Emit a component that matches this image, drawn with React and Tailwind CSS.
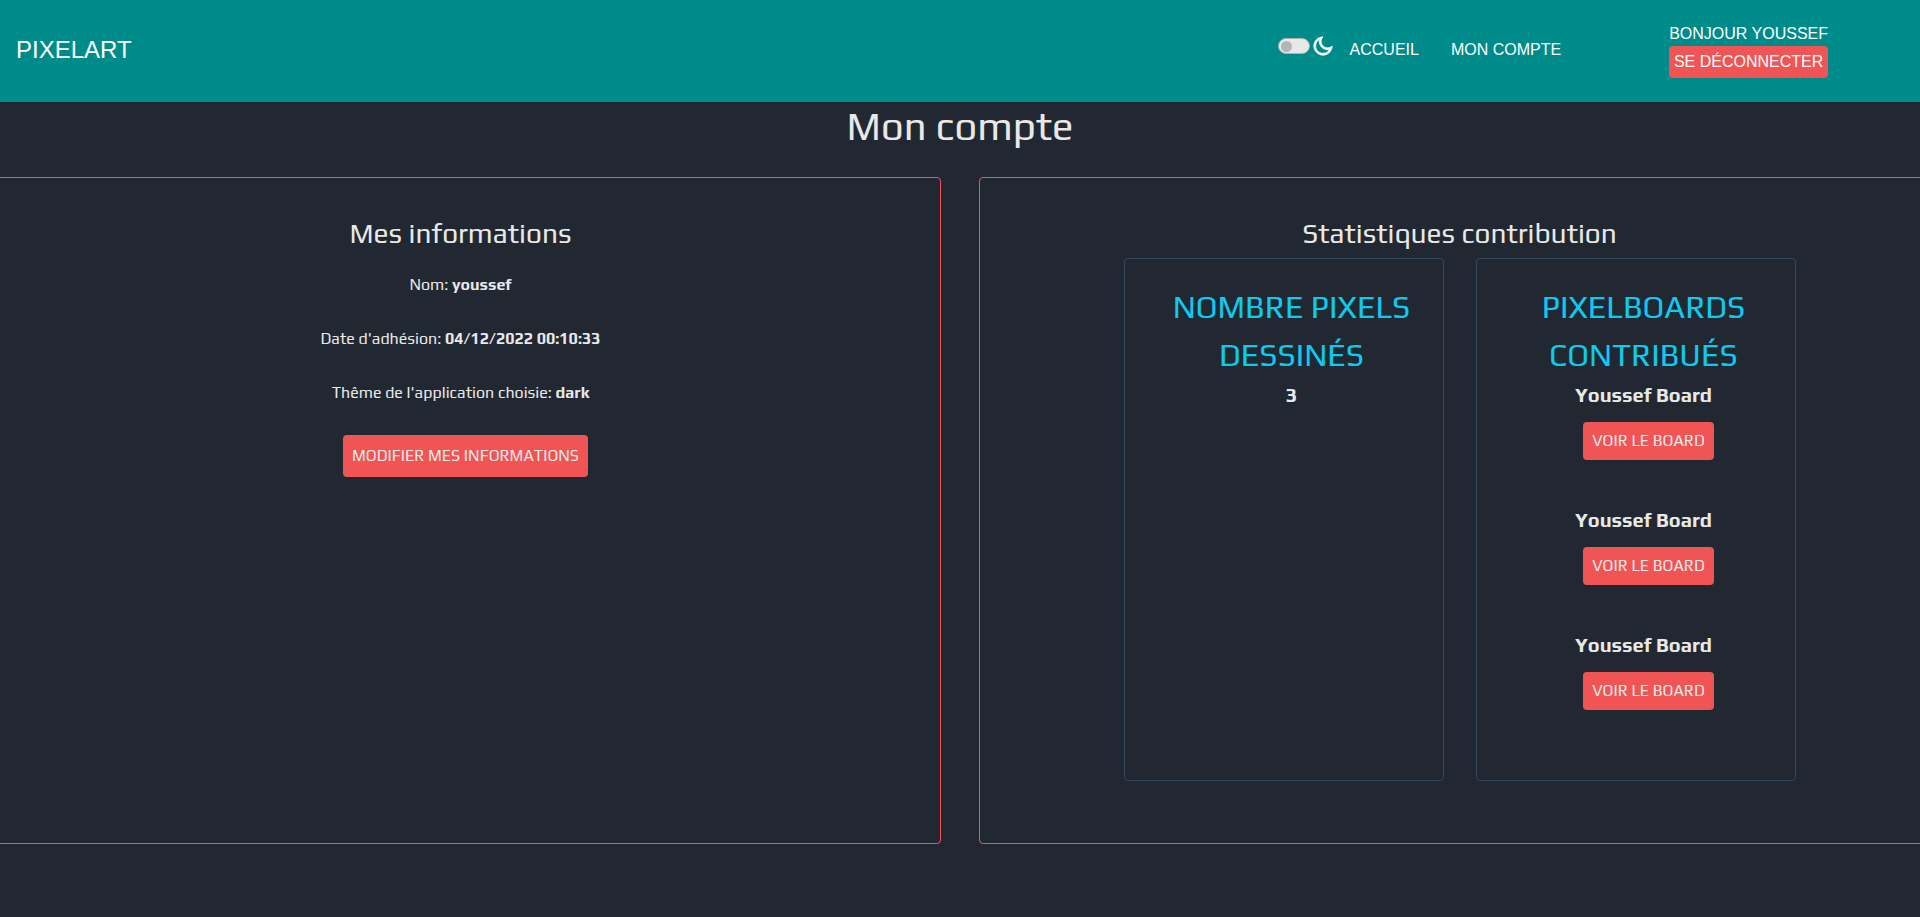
import { RiMoonLine } from "react-icons/ri";

const boards = [
  { id: 1, name: "Youssef Board" },
  { id: 2, name: "Youssef Board" },
  { id: 3, name: "Youssef Board" },
];

function Header() {
  return (
    <header className="flex h-[102px] items-center justify-between bg-[#008b8b] pb-0.5 pl-4 pr-[92px] text-base text-white">
      <a href="#" className="text-2xl">
        PIXELART
      </a>
      <nav className="flex items-center">
        <label className="mr-4 flex items-center gap-0.5 pb-2">
          <input
            type="checkbox"
            aria-label="Thème"
            className="flex h-4 w-8 appearance-none items-center rounded-full border border-[#b0b0b0] bg-[#e8e8e8] pl-0.5 before:size-[11px] before:rounded-full before:bg-[#b4b4b4]"
          />
          <RiMoonLine className="size-[22px]" strokeWidth="0.8" aria-hidden="true" />
        </label>
        <a href="#">ACCUEIL</a>
        <a href="#" className="ml-8">
          MON COMPTE
        </a>
        <div className="ml-[108px] flex flex-col text-center">
          <span>BONJOUR YOUSSEF</span>
          <button type="button" className="rounded bg-[#f05454] px-1 py-1">
            SE DÉCONNECTER
          </button>
        </div>
      </nav>
    </header>
  );
}

function Panel({ title, children }) {
  return (
    <section className="flex min-h-[667px] flex-1 flex-col items-center rounded border border-[#f05454] pb-[61px] pt-[38px]">
      <h2 className="mb-2 text-[28px] leading-[34px]">{title}</h2>
      {children}
    </section>
  );
}

function StatCard({ title, children }) {
  return (
    <div className="w-80 rounded border border-[#30475e] pb-[70px] pl-8 pr-4 pt-6 text-center text-xl">
      <h3 className="text-[32px] leading-12 text-[#0dcaf0]">{title}</h3>
      {children}
    </div>
  );
}

export default function App() {
  return (
    <div className="min-h-screen overflow-x-hidden bg-[#222831] font-['Liberation_Sans',Arial,sans-serif] text-[#e8e8e8]">
      <Header />
      <main className="font-[Play,Roboto,sans-serif]">
        <h1 className="mb-[27px] text-center text-[40px] leading-12">Mon compte</h1>
        <div className="-mx-5 flex gap-[38px]">
          <Panel title="Mes informations">
            <div className="flex flex-col items-center gap-[30px] pt-[15px] text-base">
              <p>
                Nom: <strong>youssef</strong>
              </p>
              <p>
                Date d'adhésion: <strong>04/12/2022 00:10:33</strong>
              </p>
              <p>
                Thême de l'application choisie: <strong>dark</strong>
              </p>
              <button type="button" className="ml-2.5 rounded bg-[#f05454] px-[9px] py-[9px]">
                MODIFIER MES INFORMATIONS
              </button>
            </div>
          </Panel>
          <Panel title="Statistiques contribution">
            <div className="flex gap-8">
              <StatCard title="NOMBRE PIXELS DESSINÉS">
                <p className="font-bold leading-8">3</p>
              </StatCard>
              <StatCard title="PIXELBOARDS CONTRIBUÉS">
                <ul className="flex flex-col gap-11">
                  {boards.map((board) => (
                    <li key={board.id} className="flex flex-col items-center gap-[11px]">
                      <strong className="leading-8">{board.name}</strong>
                      <button
                        type="button"
                        className="ml-2.5 rounded bg-[#f05454] px-[9px] py-[7px] text-base"
                      >
                        VOIR LE BOARD
                      </button>
                    </li>
                  ))}
                </ul>
              </StatCard>
            </div>
          </Panel>
        </div>
      </main>
    </div>
  );
}
